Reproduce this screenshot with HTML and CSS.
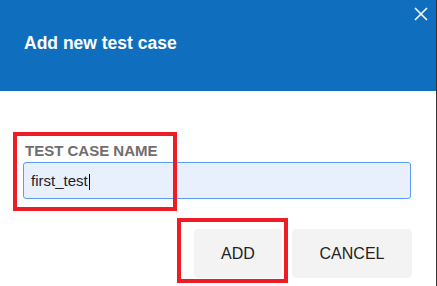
FILE: index.html
```html
<!DOCTYPE html>
<html lang="en">
<head>
    <meta charset="UTF-8">
    <title>Add new test case</title>
    <link rel="stylesheet" href="styles.css">
</head>
<body>
    <div class="dialog">
        <div class="dialog-header">
            <h1 class="dialog-title">Add new test case</h1>
            <button class="close-btn" aria-label="Close">
                <svg width="14" height="14" viewBox="0 0 14 14">
                    <path d="M1 1 L13 13 M13 1 L1 13" stroke="#fff" stroke-width="1.6" fill="none"/>
                </svg>
            </button>
        </div>
        <div class="dialog-body">
            <label class="field-label">TEST CASE NAME</label>
            <div class="field">first_test<span class="caret"></span></div>
            <div class="actions">
                <button class="btn btn-add">ADD</button>
                <button class="btn btn-cancel">CANCEL</button>
            </div>
        </div>
        <!-- annotation boxes -->
        <div class="mark mark-field"></div>
        <div class="mark mark-add"></div>
    </div>
</body>
</html>
```

FILE: styles.css
```css
body {
    margin: 0;
    background: #fff;
    font-family: "Liberation Sans", Arial, sans-serif;
}
.dialog {
    position: relative;
    width: 436px;
    height: 286px;
    border-right: 1px solid #333;
    overflow: hidden;
}
.dialog-header {
    position: relative;
    height: 91px;
    background: #106ebe;
    box-sizing: border-box;
    padding: 33px 24px 0;
}
.dialog-title {
    margin: 0;
    color: #fff;
    font-size: 17.5px;
    font-weight: bold;
    line-height: 21px;
}
.close-btn {
    position: absolute;
    top: 7px;
    right: 8px;
    padding: 0;
    border: none;
    background: none;
    line-height: 0;
}
.dialog-body {
    padding: 51px 25px 0 23px;
}
.field-label {
    display: block;
    padding-left: 2px;
    color: #6e6e6e;
    font-size: 15px;
    font-weight: bold;
    line-height: 17px;
}
.field {
    margin-top: 3px;
    height: 37px;
    box-sizing: border-box;
    padding: 0 7px;
    border: 1px solid #5b9af5;
    border-radius: 3px;
    background: #e8f0fe;
    color: #222;
    font-size: 15px;
    line-height: 35px;
}
.caret {
    display: inline-block;
    width: 1px;
    height: 16px;
    margin-left: 1px;
    background: #000;
    vertical-align: -4px;
}
.actions {
    display: flex;
    justify-content: flex-end;
    gap: 10px;
    margin-top: 30px;
    margin-right: -1px;
}
.btn {
    height: 49px;
    border: none;
    border-radius: 4px;
    background: #f3f3f3;
    color: #222;
    font-family: "Liberation Sans", Arial, sans-serif;
    font-size: 16px;
}
.btn-add {
    width: 88px;
}
.btn-cancel {
    width: 120px;
}
.mark {
    position: absolute;
    border: 4px solid #ee1c25;
    box-sizing: border-box;
}
.mark-field {
    left: 13px;
    top: 132px;
    width: 164px;
    height: 79px;
}
.mark-add {
    left: 177px;
    top: 218px;
    width: 111px;
    height: 65px;
}
```
